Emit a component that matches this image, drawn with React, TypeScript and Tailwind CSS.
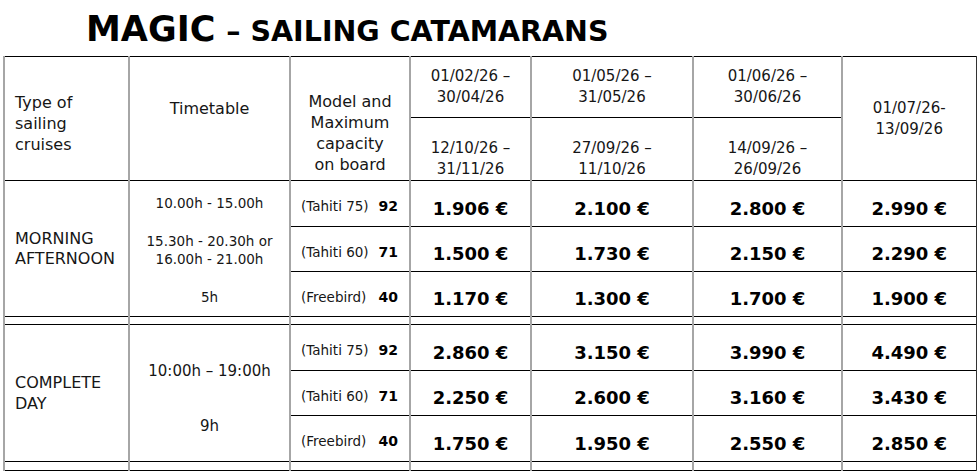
import React from 'react'

type PriceRow = {
  model: string
  seats: string
  prices: string[]
}

const morning: PriceRow[] = [
  { model: '(Tahiti 75)', seats: '92', prices: ['1.906 €', '2.100 €', '2.800 €', '2.990 €'] },
  { model: '(Tahiti 60)', seats: '71', prices: ['1.500 €', '1.730 €', '2.150 €', '2.290 €'] },
  { model: '(Freebird)', seats: '40', prices: ['1.170 €', '1.300 €', '1.700 €', '1.900 €'] },
]

const fullDay: PriceRow[] = [
  { model: '(Tahiti 75)', seats: '92', prices: ['2.860 €', '3.150 €', '3.990 €', '4.490 €'] },
  { model: '(Tahiti 60)', seats: '71', prices: ['2.250 €', '2.600 €', '3.160 €', '3.430 €'] },
  { model: '(Freebird)', seats: '40', prices: ['1.750 €', '1.950 €', '2.550 €', '2.850 €'] },
]

// horizontal rules are black, vertical ones light grey
const cell = 'border-t border-t-black border-l-2 border-l-[#a6a6a6] p-0'
const lastCell = 'border-r border-r-[#333]'

function ModelCell({ row }: { row: PriceRow }) {
  return (
    <td className={`${cell} align-middle`}>
      <div className="flex items-baseline justify-between pl-[10px] pr-[11px] pt-[6px]">
        <span className="text-[13.5px]">{row.model}</span>
        <span className="text-[14px] font-bold text-black">{row.seats}</span>
      </div>
    </td>
  )
}

function Prices({ row }: { row: PriceRow }) {
  return (
    <>
      {row.prices.map((p, i) => (
        <td
          key={i}
          className={`${cell} ${i === 3 ? lastCell : ''} pt-[9px] text-center align-middle text-[18px] font-bold text-black`}
        >
          {p}
        </td>
      ))}
    </>
  )
}

function Spacer({ h }: { h: string }) {
  return (
    <tr className={h}>
      {Array.from({ length: 7 }).map((_, i) => (
        <td key={i} className={`${cell} ${i === 6 ? lastCell : ''}`} />
      ))}
    </tr>
  )
}

export default function App() {
  return (
    <div
      className="h-[472px] w-[977px] overflow-hidden bg-white text-[#161616]"
      style={{ fontFamily: '"DejaVu Sans", sans-serif' }}
    >
      <div className="flex h-[56px] items-baseline gap-[11px] pl-[86px] pt-[12px] font-bold leading-none text-black">
        <span className="text-[35px]">MAGIC</span>
        <span className="text-[28.5px]">– SAILING CATAMARANS</span>
      </div>

      <table className="ml-[3px] w-[972px] table-fixed border-collapse border-b border-b-black">
        <colgroup>
          <col className="w-[125px]" />
          <col className="w-[161px]" />
          <col className="w-[120px]" />
          <col className="w-[121px]" />
          <col className="w-[162px]" />
          <col className="w-[149px]" />
          <col className="w-[134px]" />
        </colgroup>
        <tbody>
          <tr className="h-[61px]">
            <td rowSpan={2} className={`${cell} pl-[10px] pt-[10px] align-middle text-[16px] leading-[21px]`}>
              Type of
              <br />
              sailing
              <br />
              cruises
            </td>
            <td rowSpan={2} className={`${cell} pt-[41px] text-center align-top text-[16px] leading-[21px]`}>
              Timetable
            </td>
            <td rowSpan={2} className={`${cell} pb-[5px] text-center align-bottom text-[16px] leading-[21px]`}>
              Model and
              <br />
              Maximum
              <br />
              capacity
              <br />
              on board
            </td>
            <td className={`${cell} text-center align-middle text-[15px] leading-[21px]`}>
              01/02/26 –
              <br />
              30/04/26
            </td>
            <td className={`${cell} text-center align-middle text-[15px] leading-[21px]`}>
              01/05/26 –
              <br />
              31/05/26
            </td>
            <td className={`${cell} text-center align-middle text-[15px] leading-[21px]`}>
              01/06/26 –
              <br />
              30/06/26
            </td>
            <td rowSpan={2} className={`${cell} ${lastCell} text-center align-middle text-[15px] leading-[21px]`}>
              01/07/26-
              <br />
              13/09/26
            </td>
          </tr>
          <tr className="h-[63px]">
            <td className={`${cell} text-center align-bottom text-[15px] leading-[21px]`}>
              12/10/26 –
              <br />
              31/11/26
            </td>
            <td className={`${cell} text-center align-bottom text-[15px] leading-[21px]`}>
              27/09/26 –
              <br />
              11/10/26
            </td>
            <td className={`${cell} text-center align-bottom text-[15px] leading-[21px]`}>
              14/09/26 –
              <br />
              26/09/26
            </td>
          </tr>

          {morning.map((row, i) => (
            <tr key={row.model} className={i === 0 ? 'h-[46px]' : 'h-[45px]'}>
              {i === 0 && (
                <>
                  <td rowSpan={3} className={`${cell} pl-[10px] align-middle text-[16px] leading-[20px]`}>
                    MORNING
                    <br />
                    AFTERNOON
                  </td>
                  <td rowSpan={3} className={`${cell} align-top`}>
                    <div className="flex flex-col items-center gap-[20px] pt-[13px] text-[13.5px] leading-[18px]">
                      <span>10.00h - 15.00h</span>
                      <span className="text-center">
                        15.30h - 20.30h or
                        <br />
                        16.00h - 21.00h
                      </span>
                      <span>5h</span>
                    </div>
                  </td>
                </>
              )}
              <ModelCell row={row} />
              <Prices row={row} />
            </tr>
          ))}

          <Spacer h="h-[8px]" />

          {fullDay.map((row, i) => (
            <tr key={row.model} className={i === 1 ? 'h-[45px]' : 'h-[46px]'}>
              {i === 0 && (
                <>
                  <td rowSpan={3} className={`${cell} pl-[10px] align-middle text-[16px] leading-[21px]`}>
                    COMPLETE
                    <br />
                    DAY
                  </td>
                  <td rowSpan={3} className={`${cell} align-top`}>
                    <div className="flex flex-col items-center gap-[35px] pt-[36px] text-[15px] leading-[20px]">
                      <span>10:00h – 19:00h</span>
                      <span>9h</span>
                    </div>
                  </td>
                </>
              )}
              <ModelCell row={row} />
              <Prices row={row} />
            </tr>
          ))}

          <Spacer h="h-[9px]" />
        </tbody>
      </table>
    </div>
  )
}
